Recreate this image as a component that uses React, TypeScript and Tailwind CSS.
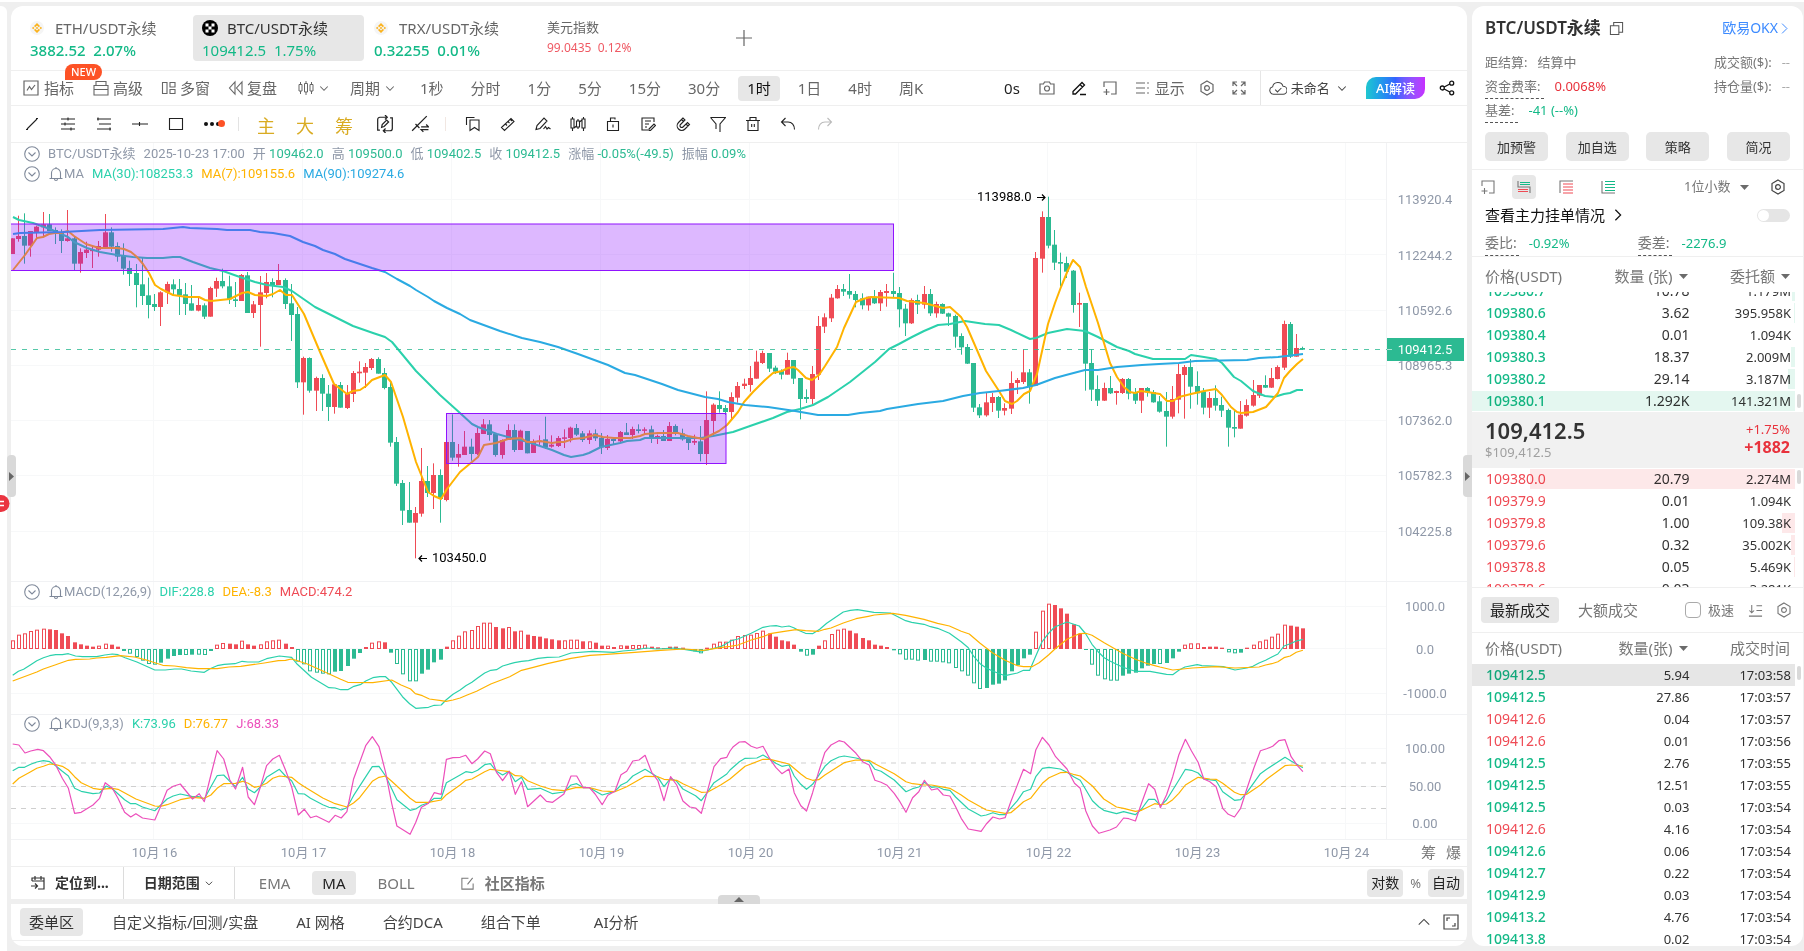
import { useState } from "react";
import type { ReactNode } from "react";
import clsx from "clsx";

type Seg = { x: number; k: number; pts: string };

const UP = "#ef4b55";
const DOWN = "#2cba92";
const TEAL = "#2bd1ac";
const YELLOW = "#ffb300";
const BLUE = "#2aaae2";
const PINK = "#ec4fbb";

// r = up, g = down; body top, body bottom, wick top, wick bottom
const CANDLES = `
r 175 222 175 222,r 168 177 107 185,g 168 197 100 251,r 153 197 153 230,r 140 157 137 178,r 133 142 96 168,g 133 153 102 153,g 150 157 142 192,
g 157 183 148 219,r 175 183 90 185,g 175 251 168 270,r 216 251 205 278,r 209 219 185 234,r 209 212 198 264,r 198 209 183 230,r 157 203 102 203,
g 157 200 142 215,g 198 230 187 245,g 227 266 190 284,g 264 282 242 318,g 279 315 252 382,g 313 348 233 375,g 346 375 293 415,g 372 381 342 393,
r 337 381 334 438,r 312 337 305 372,g 313 328 298 345,g 327 346 297 405,g 343 372 309 405,g 370 392 315 392,r 375 392 351 394,g 376 410 370 417,
r 324 410 320 410,r 303 326 293 351,g 303 319 266 325,g 319 358 287 372,g 358 363 306 381,r 285 363 282 363,g 286 399 276 399,r 373 399 363 414,
r 337 375 288 500,r 306 339 279 355,g 306 315 295 352,r 300 315 252 315,g 300 372 295 387,g 370 405 312 483,g 402 607 381 624,r 534 607 530 704,
g 534 632 532 638,r 594 632 590 693,g 594 641 583 693,g 641 681 615 723,r 613 681 613 701,g 615 683 606 683,r 642 684 615 687,r 579 642 573 666,
r 575 580 544 608,r 561 578 549 624,r 537 564 534 570,g 537 581 532 581,g 579 624 564 628,g 621 788 603 800,g 786 911 771 918,g 909 992 900 1035,
g 990 1028 906 1028,r 999 1028 981 1135,r 903 1001 804 1010,g 903 939 858 951,r 885 939 850 987,g 885 957 868 1028,r 786 960 786 964,g 786 833 703 842,
r 822 833 792 860,r 800 825 753 825,g 800 822 776 842,r 759 822 744 825,r 733 762 717 762,g 733 765 720 782,g 762 825 760 830,r 780 825 778 836,
r 750 780 733 780,g 750 810 733 816,r 752 810 749 810,g 753 820 753 820,r 784 819 778 819,r 782 785 766 798,g 778 803 710 807,r 794 800 766 803,
r 774 798 768 801,r 772 776 748 804,r 743 774 740 787,g 744 764 732 768,g 760 780 753 786,r 760 780 751 792,g 760 775 748 783,g 773 802 759 822,
r 777 804 765 810,g 777 783 772 794,r 756 784 753 787,g 757 765 729 765,r 747 765 740 777,g 748 753 733 760,r 748 752 742 765,g 748 772 737 789,
r 768 774 764 792,g 768 783 750 783,r 738 783 726 783,g 738 762 733 766,g 760 778 746 782,g 777 789 770 810,r 783 788 764 795,g 784 822 738 844,
r 720 822 634 855,r 674 723 670 765,g 675 687 634 698,g 684 696 675 705,r 651 696 637 718,r 618 653 606 668,r 611 618 596 627,r 594 615 558 635,
r 545 596 512 596,r 519 549 512 552,g 519 566 519 576,g 563 575 557 582,g 573 584 568 598,r 540 584 518 584,g 540 596 540 612,g 594 657 594 718,
g 651 657 628 669,r 582 657 558 673,r 438 584 408 600,r 412 440 400 459,r 353 415 342 426,r 327 355 315 356,g 327 335 312 348,g 333 344 282 356,
g 342 360 333 382,g 355 376 340 388,r 350 376 350 392,g 350 370 330 372,r 336 370 330 393,r 333 339 312 380,g 333 342 278 352,g 339 388 321 442,
g 386 430 372 468,r 360 430 355 432,g 360 374 344 402,r 342 374 318 386,g 342 400 327 408,r 372 400 365 413,g 372 401 370 402,g 400 410 398 438,
g 408 470 404 503,g 468 502 460 524,g 501 551 492 552,g 549 683 549 696,g 682 706 672 714,r 667 706 636 710,r 651 669 639 696,g 651 692 648 714,
r 684 692 670 706,r 609 686 574 702,r 600 609 594 642,r 577 606 508 612,g 577 618 567 671,r 234 617 216 618,r 111 236 94 278,g 111 197 50 205,
g 194 248 150 270,g 246 251 218 318,g 249 275 230 294,g 272 375 270 398,r 369 374 338 441,g 369 551 369 632,g 549 629 508 663,g 627 662 586 678,
r 624 662 608 663,g 624 640 588 642,r 633 639 632 674,r 597 639 594 642,g 597 641 594 658,g 638 662 624 672,r 624 662 624 699,g 624 637 621 650,
g 636 667 630 668,g 664 695 648 698,g 693 710 636 800,r 657 710 618 716,r 582 659 552 700,r 561 585 555 716,g 561 620 537 686,g 618 640 574 674,
g 634 683 624 703,r 654 683 636 714,g 654 677 616 692,g 675 692 650 711,g 690 743 686 800,g 741 746 690 772,r 704 746 663 746,r 675 707 658 710,
r 645 677 600 680,r 615 647 615 654,g 615 623 586 624,r 594 623 564 624,r 561 597 556 598,r 432 563 422 570,g 432 530 426 534,r 504 530 462 530,
g 504 509 500 510`
  .trim()
  .split(",")
  .map((row) => {
    const [side, ...n] = row.trim().split(" ");
    const [top, bottom, high, low] = n.map((v) => 180 + Number(v) / 3);
    return { up: side === "r", top, bottom, high, low };
  });

const MACD = [
  26, 43, 47, 54, 58, 61, 59, 57, 47, 39, 20, 14, 10, 7, 10, 16, 13, 7, -6, -14, -24, -35, -45, -47, -41, -29, -21, -18,
  -18, -17, -17, -18, -6, 13, 18, 16, 14, 25, 14, 10, 14, 23, 26, 28, 16, 6, -38, -46, -67, -71, -74, -76, -68, -66, -51,
  -29, -12, 6, 19, 23, 20, -11, -45, -76, -97, -97, -74, -62, -40, -32, 7, 26, 40, 53, 57, 69, 79, 79, 66, 62, 66, 53, 55,
  43, 39, 37, 32, 29, 26, 26, 28, 28, 23, 23, 19, 10, 10, 6, 11, 10, 12, 12, 13, 7, 5, 3, 7, 7, 4, -3, -7, -13, 4, 16, 22,
  22, 28, 39, 42, 43, 48, 55, 47, 37, 26, 23, 13, -8, -20, -17, 10, 26, 45, 58, 61, 55, 47, 33, 26, 13, 10, 6, -4, -16,
  -32, -32, -35, -33, -38, -38, -40, -43, -57, -67, -80, -103, -120, -117, -107, -104, -94, -67, -48, -28, -17, 52, 115,
  136, 132, 122, 106, 74, 46, -3, -47, -80, -91, -95, -95, -80, -74, -71, -58, -50, -45, -45, -42, -28, -8, 13, 17, 17, 6,
  7, 7, 4, -10, -13, -11, 4, 13, 23, 28, 37, 46, 73, 70, 67, 62,
];

const MA7 =
  "13,270 25,255 37,238 43,237 49,234 55,233 61,233 68,231 74,236 80,240 86,244 99,248 117,248 124,249 131,252 137,257 143,264 149,273 155,285 161,289 173,295 187,297 199,297 205,300 211,301 230,299 242,293 248,292 255,295 267,296 273,294 280,290 286,295 292,295 304,314 320,352 334,384 347,394 353,391 360,390 366,386 372,380 385,375 391,382 403,417 416,462 428,492 434,496 441,499 447,489 460,472 478,457 484,445 496,443 508,439 521,438 527,442 533,442 540,441 552,443 558,442 564,442 573,439 583,438 595,435 603,437 614,438 630,438 640,436 645,434 658,433 678,433 688,436 703,439 707,437 719,431 727,425 738,412 744,402 753,392 765,380 773,373 782,371 788,368 794,367 798,370 806,378 812,380 819,375 825,366 837,347 844,328 856,302 863,299 871,297 899,298 907,301 924,303 943,308 950,307 961,317 967,327 980,357 986,371 999,391 1005,401 1012,404 1017,401 1024,394 1030,391 1037,374 1048,324 1055,303 1061,287 1068,270 1073,260 1080,267 1086,287 1098,323 1104,343 1110,363 1117,377 1124,387 1130,392 1135,393 1141,391 1160,394 1167,401 1173,401 1179,397 1191,394 1204,391 1216,389 1222,395 1231,407 1237,412 1241,413 1253,412 1266,407 1273,399 1278,393 1284,378 1290,371 1297,364 1303,359";
const MA30 =
  "13,217 19,220 33,223 50,229 68,237 74,242 87,248 100,252 117,255 133,257 147,258 163,258 173,257 180,257 193,262 210,268 223,271 237,276 255,282 267,285 283,287 292,291 315,307 333,316 353,326 373,333 385,337 392,342 416,371 440,395 460,413 472,424 478,427 497,434 512,438 528,442 540,446 552,450 564,455 571,457 583,455 589,453 601,447 620,443 627,441 640,440 645,438 673,438 701,438 713,436 733,432 750,426 773,418 787,412 800,409 813,405 828,397 850,382 875,362 889,349 899,344 912,337 924,331 938,325 950,324 965,321 985,324 999,325 1011,330 1030,339 1036,338 1048,333 1067,329 1085,331 1098,337 1117,347 1129,351 1135,354 1153,359 1185,359 1191,355 1204,357 1216,359 1222,363 1234,377 1241,381 1253,391 1265,396 1274,397 1284,394 1290,393 1297,390 1303,390";
const MA90 =
  "13,234 20,233 63,232 100,230 163,229 183,227 190,228 217,229 227,230 250,230 260,232 273,233 290,236 303,242 315,246 323,250 335,254 345,259 360,264 372,268 385,272 397,279 410,286 416,290 428,297 434,301 447,308 460,314 470,320 500,331 522,338 540,342 558,347 578,354 608,365 625,373 635,375 662,384 678,390 705,397 718,399 728,402 745,405 768,407 795,411 818,415 848,415 860,413 880,411 887,409 918,404 943,401 963,396 980,393 999,391 1023,388 1036,385 1055,378 1066,375 1085,370 1098,370 1117,367 1142,365 1159,364 1179,363 1195,361 1247,360 1259,358 1278,357 1303,354";

const DIF = [
  "27,316 39,304 50,298 65,284 78,272 92,263 105,257 118,254 132,254 145,251 160,258 175,260 205,260 222,255 238,252 250,254 265,263 290,276 328,300 350,300 370,297 385,297 405,303 433,307 445,296 460,287 475,283 498,281 513,274 525,276 548,276 565,266 592,258 618,262 630,283 660,322 697,353 710,354 722,359 737,359 750,349 765,343 775,333 790,323 805,320 817,320 830,337 853,380 868,401 881,415 908,412 920,406 935,405 945,390 960,373 975,360 987,347 1000,337 1012,324 1027,309 1040,301 1052,299 1065,288 1090,278 1105,274 1120,272 1140,265 1160,262 1185,261 1210,249 1255,244 1300,247 1320,243 1345,240 1370,234 1390,237 1410,236 1430,234 1450,238 1480,245 1500,240 1530,228 1550,212",
  "0,213 17,207 45,190 70,172 85,168 98,167 110,171 125,168 135,173 145,181 160,190 175,191 190,178 205,160 240,126 255,121 270,119 305,127 340,129 372,152 385,157 411,163 425,170 440,175 465,190 490,215 505,233 517,260 530,281 543,294 556,303 583,317 609,309 622,301 635,301 648,258 661,216 675,190 688,171 714,156 740,168 754,192 767,223 780,245 793,263 806,274 819,283 832,291 845,298 859,304 890,304 925,313 938,314 951,301 964,291 990,284 1000,287 1045,290 1070,300 1095,294 1108,289 1121,279 1135,271 1148,261 1161,252 1174,228 1187,221 1200,213 1214,208",
];
const DEA = [
  "27,333 78,306 92,297 118,284 145,271 160,268 190,267 205,264 225,262 255,257 285,261 315,272 345,286 370,288 395,293 420,296 460,296 485,291 510,289 535,284 560,279 590,272 605,271 617,267 630,272 650,281 685,304 722,328 737,337 790,338 830,330 850,345 870,357 880,371 895,377 910,387 935,392 945,394 960,390 975,384 990,375 1010,364 1040,342 1080,320 1105,301 1130,292 1160,281 1210,265 1250,256 1285,253 1345,247 1400,241 1450,237 1490,241 1530,232",
  "0,229 17,225 45,210 70,200 85,191 115,184 140,179 160,182 188,184 201,178 214,174 240,159 267,146 293,139 306,135 345,130 372,136 411,148 440,160 465,168 490,184 507,192 530,220 556,248 583,271 596,279 609,287 622,290 640,290 655,278 675,255 688,238 714,208 740,191 754,190 767,196 793,218 832,250 859,268 885,281 898,286 911,291 938,300 980,294 1030,290 1070,294 1121,291 1135,285 1148,281 1161,275 1174,263 1187,258 1200,247 1214,241",
];
const K_LINE = [
  "27,602 40,592 52,592 65,583 78,576 92,572 105,575 118,587 132,604 145,618 158,655 172,664 197,671 211,669 225,648 238,656 264,689 277,701 288,701 302,711 328,722 354,687 367,678 382,672 408,680 422,680 433,687 447,650 460,617 474,615 487,634 499,650 514,622 526,657 539,668 552,650 565,622 592,598 605,618 618,632 632,671 645,672 658,685 684,704 697,712 710,713 723,720 735,713 749,677 789,590 803,589 817,618 841,689 869,721 881,717 893,706 908,698 920,685 935,685 946,638 975,615 987,605 1000,608 1012,601 1027,584 1039,581 1052,604 1065,615 1079,604 1092,635 1105,622 1118,658 1145,655 1171,671 1195,666 1210,645 1222,641 1236,653 1249,653 1276,675 1303,664 1316,645 1328,637 1341,618 1367,598 1394,622 1407,650 1421,625 1434,634 1447,657 1474,677 1486,692 1500,665 1513,638 1540,612",
  "0,600 20,575 32,565 57,564 70,555 85,568 97,580 110,589 125,585 136,618 150,643 162,658 175,643 201,589 214,572 231,561 242,558 267,564 295,575 307,598 320,604 348,630 373,665 387,656 400,651 412,637 427,652 440,650 452,658 466,661 478,681 505,717 532,738 543,735 557,728 571,734 583,734 609,692 622,665 637,658 648,620 662,595 676,592 700,597 714,607 730,622 742,631 768,692 782,711 792,721 819,731 834,725 859,734 872,717 887,688 900,688 912,707 925,690 951,631 965,598 978,601 992,609 1004,627 1030,632 1044,665 1069,691 1082,689 1095,668 1124,611 1137,598 1176,562 1189,573 1214,593",
];
const D_LINE = [
  "27,642 40,625 65,605 78,595 92,589 105,582 118,584 132,589 145,600 158,620 172,638 197,655 211,658 238,655 250,658 288,687 328,708 340,709 354,704 382,689 408,682 433,685 447,675 460,655 474,641 499,640 514,634 526,640 539,652 552,648 565,640 578,625 592,618 618,622 632,638 645,650 684,684 710,701 735,711 749,699 762,683 789,634 803,622 817,618 830,634 869,685 881,697 908,697 935,690 946,674 975,645 987,631 1000,627 1027,605 1039,598 1052,600 1079,605 1092,617 1105,618 1118,632 1145,648 1171,659 1195,662 1222,652 1249,653 1276,663 1303,665 1328,650 1367,619 1394,620 1407,628 1434,631 1447,641 1486,667 1500,666 1527,645",
  "0,627 32,589 70,568 85,568 125,582 150,612 162,625 175,631 188,629 201,615 242,578 267,570 295,571 307,581 348,611 373,635 387,641 412,645 427,645 466,655 490,675 505,690 543,720 583,730 595,728 609,712 622,695 637,685 662,640 676,623 700,608 714,607 730,614 742,618 768,648 792,687 819,711 834,715 859,724 872,721 900,701 912,704 925,702 938,689 951,670 965,645 992,622 1017,627 1030,628 1044,640 1069,667 1082,674 1095,673 1124,645 1137,628 1176,587 1189,585 1214,588",
];
const J_LINE = [
  "27,522 40,525 53,549 65,543 80,538 92,542 105,560 118,585 132,625 145,655 158,730 172,727 197,705 211,685 223,638 238,655 250,685 264,727 277,741 288,731 302,744 328,750 340,710 354,661 367,649 382,642 408,687 422,671 433,695 447,615 460,542 474,567 487,630 499,657 514,592 526,681 539,704 552,650 565,587 578,567 592,556 605,600 618,650 632,735 645,718 658,743 670,738 697,757 710,736 723,744 735,725 749,628 775,527 789,500 803,530 817,607 830,700 841,768 869,793 881,757 893,712 908,700 920,668 935,673 946,568 960,563 975,562 987,556 1000,581 1012,567 1027,543 1039,551 1052,607 1065,632 1079,604 1092,673 1105,635 1118,710 1145,675 1158,694 1171,697 1195,672 1210,618 1222,618 1236,653 1249,653 1261,672 1276,704 1288,676 1303,664 1316,614 1328,604 1341,573 1354,570 1367,556 1381,607 1394,632 1407,692 1421,620 1434,645 1447,693 1462,711 1474,714 1486,730 1500,658 1513,590 1527,566 1540,562",
  "0,543 7,530 20,516 32,515 45,529 57,535 70,529 85,568 97,592 110,611 125,597 136,668 150,707 162,723 175,668 188,605 201,547 214,525 231,512 242,516 267,550 281,575 295,585 307,631 320,637 333,646 348,670 360,695 373,727 387,683 400,665 412,631 427,660 440,656 452,675 466,678 478,710 490,745 505,777 532,784 543,762 557,741 571,747 583,743 595,695 622,598 637,611 648,540 662,502 676,525 690,560 714,597 730,640 742,655 754,723 768,768 782,790 805,780 819,771 834,744 845,746 859,753 872,700 887,641 900,658 912,713 925,675 938,620 951,555 965,508 978,543 992,577 1004,627 1017,635 1030,650 1044,715 1056,733 1069,741 1082,715 1095,657 1110,595 1124,542 1137,536 1150,529 1163,512 1176,509 1189,560 1202,586 1214,605",
];

const candleX = (i: number) => Math.floor(12 + i * 6.205);

// joins the two halves of an indicator line into one set of plot points
const joinHalves = (halves: string[]) => {
  const segs: Seg[] = halves.map((pts, i) => ({ x: i * 730, k: 2.119, pts }));
  return segs
    .flatMap((s) =>
      s.pts.split(" ").map((p) => {
        const [x, y] = p.split(",").map(Number);
        return `${(s.x + x / s.k).toFixed(1)},${(570 + y / 3).toFixed(1)}`;
      })
    )
    .join(" ");
};

const DAYS = ["16", "17", "18", "19", "20", "21", "22", "23", "24"];
const dayX = (i: number) => 153.5 + i * 149;

interface IconProps {
  d: string;
  size?: number;
  w?: number;
  className?: string;
  children?: ReactNode;
}

const Icon = ({ d, size = 16, w = 1.2, className, children }: IconProps) => (
  <svg
    width={size}
    height={size}
    viewBox="0 0 16 16"
    fill="none"
    stroke="currentColor"
    strokeWidth={w}
    className={clsx("shrink-0", className)}
    aria-hidden="true"
  >
    <path d={d} />
    {children}
  </svg>
);

const HEX = "M8 1l6 3.5v7L8 15l-6-3.5v-7z M8 5.6a2.4 2.4 0 1 1 0 4.8a2.4 2.4 0 1 1 0-4.8z";
const CORNER = "M2 7V2h12v12H9 M4.500 9v6 M1.500 12h6";
const CHEVRON = "M3 6l5 5 5-5";

const Chevron = ({ size = 12, className }: { size?: number; className?: string }) => (
  <Icon d={CHEVRON} size={size} w={1.4} className={className} />
);

const Triangle = () => (
  <svg width="9" height="5" viewBox="0 0 9 5" className="shrink-0 fill-[#6b6b6b]" aria-hidden="true">
    <path d="M0 0h9L4.500 5z" />
  </svg>
);

const BinanceIcon = () => (
  <svg width="14" height="14" viewBox="0 0 14 14" className="shrink-0" aria-hidden="true">
    <circle cx="7" cy="7" r="7" fill="#f5f5f5" />
    <g fill="#fbb21c">
      <path d="M7 2l3 3-1.200 1.200L7 4.400 5.200 6.200 4 5z M7 12l3-3-1.200-1.200L7 9.600 5.200 7.800 4 9z M7 5.800L8.200 7 7 8.200 5.800 7z M3.200 5.800L4.400 7 3.200 8.200 2 7z M10.800 5.800L12 7l-1.200 1.200L9.600 7z" />
    </g>
  </svg>
);

const OkxIcon = () => (
  <svg width="16" height="16" viewBox="0 0 16 16" className="shrink-0" aria-hidden="true">
    <circle cx="8" cy="8" r="8" fill="#000" />
    <path
      d="M3.500 3.500h3v3h-3z M9.500 3.500h3v3h-3z M6.500 6.500h3v3h-3z M3.500 9.500h3v3h-3z M9.500 9.500h3v3h-3z"
      fill="#fff"
    />
  </svg>
);

const Tabs = () => (
  <div className="flex h-[65px] shrink-0 items-start border-b border-[#efefef] pt-[9px]">
    <button className="ml-[2px] flex h-[46px] w-[171px] flex-col justify-center gap-1 rounded pt-px pl-[17px] text-left">
      <span className="flex items-center gap-[11px] text-[15px] leading-[18px] text-[#666]">
        <BinanceIcon />
        ETH/USDT永续
      </span>
      <span className="text-[15px] font-medium leading-[18px] text-[#13b987]">3882.52&nbsp; 2.07%</span>
    </button>
    <button className="ml-[9px] flex h-[46px] w-[171px] flex-col justify-center gap-1 rounded bg-[#e7e7e7] pt-px pl-[9px] text-left">
      <span className="flex items-center gap-[9px] text-[15px] leading-[18px] text-[#333]">
        <OkxIcon />
        BTC/USDT永续
      </span>
      <span className="text-[15px] leading-[18px] text-[#13b987]">109412.5&nbsp; 1.75%</span>
    </button>
    <button className="flex h-[46px] w-[171px] flex-col justify-center gap-1 rounded pt-px pl-[10px] text-left">
      <span className="flex items-center gap-[11px] text-[15px] leading-[18px] text-[#666]">
        <BinanceIcon />
        TRX/USDT永续
      </span>
      <span className="text-[15px] font-medium leading-[18px] text-[#13b987]">0.32255&nbsp; 0.01%</span>
    </button>
    <button className="flex h-[46px] w-[171px] flex-col justify-center gap-1 rounded pl-[12px] text-left">
      <span className="text-[13px] leading-4 text-[#666]">美元指数</span>
      <span className="text-xs leading-[18px] text-[#ef5a64]">99.0435&nbsp; 0.12%</span>
    </button>
    <button className="ml-[30px] mt-[15px] text-[#666]" aria-label="添加">
      <Icon d="M8 0v16M0 8h16" />
    </button>
  </div>
);

const PERIODS = ["1秒", "分时", "1分", "5分", "15分", "30分", "1时", "1日", "4时", "周K"];

const PeriodBar = () => {
  const [period, setPeriod] = useState("1时");
  return (
    <div className="flex h-[35px] shrink-0 items-center border-b border-[#efefef] pl-3 text-[15px] leading-none text-[#666] whitespace-nowrap">
      <button className="relative flex w-[70px] items-center gap-[5px]">
        <Icon d="M1 1h14v14H1z M4 10.500l2.500-4 2 3 3.500-4.500" />
        指标
        <span className="absolute -top-4 left-[42px] rounded-[8px] rounded-bl-none bg-[#fd5226] px-1.5 py-0.5 text-[11px] font-medium leading-3 text-white">
          NEW
        </span>
      </button>
      <button className="flex w-[68px] items-center gap-1">
        <Icon d="M1 5.500h14V15H1z M3 5.500V1.500h10v4 M1 9.500h14" w={1.1} />
        高级
      </button>
      <button className="flex w-[67px] items-center gap-[3px]">
        <Icon d="M1.500 2.500h4.500v11H1.500z M9 2.500h5V7H9z M9 9.500h5v4H9z" w={1.1} />
        多窗
      </button>
      <button className="flex w-[70px] items-center gap-[3px]">
        <Icon d="M7 2v12L1.500 8z M14 2v12L8.500 8z" w={1.1} />
        复盘
      </button>
      <button className="flex w-[52px] items-center gap-1" aria-label="K线类型">
        <Icon
          d="M2.500 2v2.500M2.500 11v3M1 4.500h3V11H1z M8 1v2.500M8 12v3M6.500 3.500h3V12h-3z M13.500 2v2.500M13.500 11v3M12 4.500h3V11h-3z"
          w={1}
        />
        <Chevron />
      </button>
      <button className="flex w-[61px] items-center gap-1">
        周期
        <Chevron />
      </button>
      <div className="flex items-center gap-[9px]">
        {PERIODS.map((p) => (
          <button
            key={p}
            onClick={() => setPeriod(p)}
            className={clsx("h-[25px] rounded px-[9px]", p === period && "bg-[#e7e7e7] text-[#111]")}
          >
            {p}
          </button>
        ))}
      </div>
      <div className="ml-auto flex items-center">
        <span className="text-[#222]">0s</span>
        <button className="ml-[19px]" aria-label="截图">
          <Icon d="M1 4h3.500l1-2h5l1 2H15v10H1z M8 6a2.500 2.500 0 1 1 0 5a2.500 2.500 0 1 1 0-5z" />
        </button>
        <button className="ml-4 text-[#111]" aria-label="画线">
          <Icon d="M2 11.500L11 2.500l2.500 2.500-9 9H2z M9 4.500L11.500 7 M9 14.500h6" w={1.3} />
        </button>
        <button className="ml-[15px]" aria-label="窗口">
          <Icon d={CORNER} />
        </button>
        <button className="ml-[17px] flex items-center gap-1">
          <Icon d="M1 3h9M1 8h9M1 13h9M13 2.300v1.500M13 7.300v1.500M13 12.300v1.500" />
          显示
        </button>
        <button className="ml-[14px]" aria-label="设置">
          <Icon d={HEX} />
        </button>
        <button className="ml-4" aria-label="全屏">
          <Icon d="M2 6V2h4M2 2l4 4M10 2h4v4M14 2l-4 4M2 10v4h4M2 14l4-4M14 10v4h-4M14 14l-4-4" />
        </button>
        <div className="ml-[13px] h-[34px] w-px bg-[#e6e6e6]" />
        <button className="ml-2 flex items-center text-[13px] text-[#444]">
          <Icon
            d="M4 13.500a3.300 3.300 0 0 1-.8-6.500A4.800 4.800 0 0 1 12.500 6.500a3.500 3.500 0 0 1 0 7z M5.500 9.500l2 2 3.500-3.500"
            size={18}
            w={0.9}
          />
          <span className="ml-1">未命名</span>
          <Chevron className="ml-1.5" />
        </button>
        <button className="ml-[18px] h-[22px] rounded-[10px] rounded-tr-none rounded-bl-none bg-linear-to-r from-[#21c7cf] via-[#3463ff] to-[#c72dff] px-[10px] text-[13px] font-medium text-white">
          AI解读
        </button>
        <button className="mr-3 ml-[14px] text-[#111]" aria-label="分享">
          <Icon d="M5.200 7l5.600-3M5.200 9l5.600 3" w={1.3}>
            <circle cx="3.300" cy="8" r="2" />
            <circle cx="12.700" cy="3.200" r="2" />
            <circle cx="12.700" cy="12.800" r="2" />
          </Icon>
        </button>
      </div>
    </div>
  );
};

const LINE_TOOLS = [
  { name: "线段", d: "M3 13L13 3M2 13.500h2M12 2.500h2" },
  { name: "平行线", d: "M1 3h14M1 8h14M1 13h14M8 1.500v3M5 6.500v3M11 11.500v3" },
  { name: "通道", d: "M1 3h14M3 8h12M1 13h14M2 1.500v3M14 11.500v3" },
  { name: "水平线", d: "M0 8h16M7.500 6v4" },
  { name: "矩形", d: "M1.500 2.500h13v11h-13z" },
];

const EDIT_TOOLS = [
  { name: "书签", d: "M1.500 9V1.500h8M5 4h9v10.500l-4.500-3-4.500 3z" },
  { name: "标尺", d: "M1.500 11.500l9.500-9 3 3-9.500 9zM8 5.500l1.500 1.500M5.500 8l1.500 1.500M10.500 3.500L12 5" },
  { name: "画笔", d: "M1 13.500l1-4 7-7.500 3 3-7 7.500zM8.500 13l2-2.500 1.500 2.500 1.500-1.500 2 1.500" },
  { name: "K线", d: "M1 3h3v9H1zM2.500 1v2M2.500 12v3M6.500 5h3v6h-3zM8 3v2M8 11v2M12 3h3v9h-3zM13.500 1v2M13.500 12v3M4 12l2.500-2M9.500 6L12 4" },
  { name: "锁定", d: "M2.500 5.500h11v9h-11zM5.500 5.500V2h4.500v1.500M8 8.500v3" },
  { name: "备注", d: "M8 14H2V2h12v4M5 5h6M5 8h4M5 11h2M9 13l5-5 1.500 1.500-5 5H9z" },
  { name: "磁吸", d: "M8 2L3.500 6.500a4.500 4.500 0 0 0 6.500 6.500L14.500 8.500l-2-2L8 11a1.700 1.700 0 0 1-2.500-2.500L10 4zM6.500 3.500l2 2M11 8l2 2" },
  { name: "筛选", d: "M.5 1.500h15L10 8v8M.5 1.500L6 8v5" },
  { name: "删除", d: "M1 4.500h14M3 4.500h10V14.500H3zM5 4.500V1.500h6v3M6.700 8v3M9.300 8v3" },
  { name: "撤销", d: "M5.500 2L1.500 6l4 4M1.500 6H8c4 0 6.500 3 6.500 7.500" },
];

const DrawBar = () => (
  <div className="flex h-[37px] shrink-0 items-center border-b border-[#efefef] pl-[13px] text-[#222]">
    <div className="flex items-center gap-5">
      {LINE_TOOLS.map((t) => (
        <button key={t.name} aria-label={t.name}>
          <Icon d={t.d} w={1.1} />
        </button>
      ))}
      <button className="flex items-center gap-0.5" aria-label="更多">
        <span className="size-1 rounded-full bg-[#111]" />
        <span className="size-1 rounded-full bg-[#111]" />
        <span className="size-1 rounded-full bg-[#111]" />
        <span className="-ml-1 mb-0.5 size-[7px] rounded-full bg-[#fd5226]" />
      </button>
    </div>
    <div className="ml-[13px] h-[14px] w-px bg-[#e3e3e3]" />
    <div className="mt-1 ml-[18px] flex items-center gap-[21px] text-[18px] leading-none text-[#d9ab22]">
      <button>主</button>
      <button>大</button>
      <button>筹</button>
    </div>
    <button className="ml-[23px]" aria-label="同步画线">
      <Icon
        d="M3.500 13.500h-2V4a2 2 0 0 1 2-2H9M12.500 2.500h2V12a2 2 0 0 1-2 2H7M8 0l2 2-2 2M8.500 12l-2 2 2 2M5 11l.5-2.500 4-4 1.700 1.700-4 4z"
        size={18}
        w={1.1}
      />
    </button>
    <button className="ml-[17px]" aria-label="切换画线">
      <Icon d="M1 14L14 1M4 8l3.500 3.500M9 10.500h6.500l-2-2M15.500 13H9l2 2" size={18} w={1.1} />
    </button>
    <div className="ml-[16px] h-[14px] w-px bg-[#f1e7e2]" />
    <div className="ml-[19px] flex items-center gap-[19px]">
      {EDIT_TOOLS.map((t) => (
        <button key={t.name} aria-label={t.name}>
          <Icon d={t.d} w={1.1} />
        </button>
      ))}
      <button className="ml-0.5 text-[#bbb]" aria-label="重做">
        <Icon d="M10.500 2l4 4-4 4M14.500 6H8c-4 0-6.500 3-6.500 7.500" w={1.1} />
      </button>
    </div>
  </div>
);

const Fold = () => (
  <button aria-label="折叠" className="shrink-0 text-[#7f899a]">
    <Icon d="M8 .7a7.300 7.300 0 1 1 0 14.600a7.300 7.300 0 1 1 0-14.600zM4.500 6.500L8 10l3.500-3.500" w={1.1} />
  </button>
);

const Bell = () => (
  <Icon
    d="M1.500 12.500h13M3.500 12.500V7a4.500 4.500 0 0 1 9 0v5.500M8 2.500V1M6.500 13a1.500 1.500 0 0 0 3 0"
    size={16}
    w={1.1}
    className="text-[#7f899a]"
  />
);

const Field = ({ label, value }: { label: string; value: string }) => (
  <span>
    {label} <span className="text-[#2cba92]">{value}</span>
  </span>
);

const Plot = () => (
  <svg
    viewBox="11 143 1376 697"
    preserveAspectRatio="none"
    className="absolute inset-0 h-full w-full"
    role="img"
    aria-label="BTC/USDT K线图"
  >
    <g stroke="#f7f8f9">
      {[199.5, 254.5, 310.5, 365.5, 420.5, 475.5, 531.5, 606.5, 648.5, 693.5, 748.5, 786.5, 823.5].map((y) => (
        <path key={y} d={`M11 ${y}H1387`} />
      ))}
      {DAYS.map((d, i) => (
        <path key={d} d={`M${dayX(i)} 143V840`} />
      ))}
    </g>
    <path d="M11 581.500H1387M11 714.500H1387M11 839.500H1387M1386.500 143V840" stroke="#f1f2f4" />
    <path d="M11 763H1387M11 786.500H1387M11 808.500H1387" stroke="#cfcfcf" strokeDasharray="5 5" />

    {CANDLES.map((c, i) => {
      const x = candleX(i);
      return (
        <g key={i} fill={c.up ? UP : DOWN}>
          <rect x={x} y={c.high} width="1" height={c.low - c.high} />
          <rect x={x - 2} y={c.top} width="5" height={Math.max(c.bottom - c.top, 1.5)} />
        </g>
      );
    })}
    <g fill="none" strokeWidth="2" strokeLinejoin="round">
      <polyline points={MA30} stroke={TEAL} />
      <polyline points={MA7} stroke={YELLOW} />
      <polyline points={MA90} stroke={BLUE} />
    </g>
    <path d="M11 349.500H1387" stroke={DOWN} strokeDasharray="5 6" strokeOpacity=".8" />
    <g fill="#9013fe" fillOpacity=".3" stroke="#9013fe">
      <rect x="0" y="224" width="893.5" height="46.500" />
      <rect x="446.500" y="413.500" width="279.500" height="50" />
    </g>

    {MACD.map((v, i) => {
      const x = candleX(i) - 1;
      const h = Math.abs(v) / 3;
      const hollow = h > 3 && Math.abs(v) >= Math.abs(MACD[i - 1] ?? 0);
      const color = v > 0 ? UP : DOWN;
      const y = v > 0 ? 649 - h : 649;
      return hollow ? (
        <rect key={i} x={x + 0.5} y={y + 0.5} width="3" height={h - 1} fill="#fff" stroke={color} />
      ) : (
        <rect key={i} x={x} y={y} width="4" height={h} fill={color} />
      );
    })}
    <g fill="none" strokeWidth="1.2" strokeLinejoin="round">
      <polyline points={joinHalves(DIF)} stroke={TEAL} />
      <polyline points={joinHalves(DEA)} stroke={YELLOW} />
      <polyline points={joinHalves(K_LINE)} stroke={TEAL} />
      <polyline points={joinHalves(D_LINE)} stroke={YELLOW} />
      <polyline points={joinHalves(J_LINE)} stroke={PINK} />
    </g>

    <g fontSize="13" fill="#000">
      <text x="977" y="201">113988.0</text>
      <text x="432" y="562">103450.0</text>
    </g>
    <path d="M1037 197.500h8m-3-3l3 3-3 3M427 558.500h-8m3-3l-3 3 3 3" stroke="#000" strokeWidth="1.200" fill="none" />
  </svg>
);

const AXIS = [
  { y: 199, t: "113920.4" },
  { y: 255, t: "112244.2" },
  { y: 310, t: "110592.6" },
  { y: 365, t: "108965.3" },
  { y: 420, t: "107362.0" },
  { y: 475, t: "105782.3" },
  { y: 531, t: "104225.8" },
  { y: 606, t: "1000.0" },
  { y: 649, t: "0.0" },
  { y: 693, t: "-1000.0" },
  { y: 748, t: "100.00" },
  { y: 786, t: "50.00" },
  { y: 823, t: "0.00" },
];

const PriceAxis = () => (
  <svg viewBox="1387 143 80 697" preserveAspectRatio="none" className="h-full w-20 shrink-0">
    <path d="M1387 581.500H1467M1387 714.500H1467M1387 839.500H1467" stroke="#f1f2f4" />
    <g fontSize="13" fill="#8f98a8" textAnchor="middle">
      {AXIS.map((a) => (
        <text key={a.y} x="1425" y={a.y + 5}>
          {a.t}
        </text>
      ))}
    </g>
    <rect x="1387" y="338" width="77" height="23" fill={DOWN} />
    <path d="M1387 349.500h5" stroke="#fff" strokeOpacity=".6" />
    <text x="1425" y="354" fontSize="13" fill="#fff" textAnchor="middle">
      109412.5
    </text>
  </svg>
);

const Chart = () => (
  <div className="flex min-h-0 flex-1 flex-col [font-family:Roboto,'Noto_Sans_CJK_SC',sans-serif]">
    <div className="flex min-h-0 flex-1">
      <div className="relative flex-1 overflow-hidden text-[13px] leading-4 text-[#8f98a8] whitespace-nowrap">
        <Plot />
        <div className="absolute top-[3px] left-[13px] flex items-center gap-2">
          <Fold />
          <span>BTC/USDT永续</span>
          <span>2025-10-23 17:00</span>
          <Field label="开" value="109462.0" />
          <Field label="高" value="109500.0" />
          <Field label="低" value="109402.5" />
          <Field label="收" value="109412.5" />
          <Field label="涨幅" value="-0.05%(-49.5)" />
          <Field label="振幅" value="0.09%" />
        </div>
        <div className="absolute top-[23px] left-[13px] flex items-center gap-2">
          <Fold />
          <span className="flex items-center">
            <Bell />
            MA
          </span>
          <span className="text-[#2bd1ac]">MA(30):108253.3</span>
          <span className="text-[#ffb300]">MA(7):109155.6</span>
          <span className="text-[#2aaae2]">MA(90):109274.6</span>
        </div>
        <div className="absolute top-[441px] left-[13px] flex items-center gap-2">
          <Fold />
          <span className="flex items-center">
            <Bell />
            MACD(12,26,9)
          </span>
          <span className="text-[#2bd1ac]">DIF:228.8</span>
          <span className="text-[#ffb300]">DEA:-8.3</span>
          <span className="text-[#ef4b55]">MACD:474.2</span>
        </div>
        <div className="absolute top-[573px] left-[13px] flex items-center gap-2">
          <Fold />
          <span className="flex items-center">
            <Bell />
            KDJ(9,3,3)
          </span>
          <span className="text-[#2bd1ac]">K:73.96</span>
          <span className="text-[#ffb300]">D:76.77</span>
          <span className="text-[#ec4fbb]">J:68.33</span>
        </div>
      </div>
      <PriceAxis />
    </div>
    <div className="flex h-[26px] shrink-0 items-center pl-[69px] text-[13px] text-[#8f98a8]">
      {DAYS.map((d) => (
        <span key={d} className="w-[149px] shrink-0 text-center">
          10月 {d}
        </span>
      ))}
      <span className="ml-auto flex gap-2.5 pr-1.5 text-[15px] text-[#777]">
        <button>筹</button>
        <button>爆</button>
      </span>
    </div>
  </div>
);

const RangeBar = () => (
  <div className="flex h-[33px] shrink-0 items-center border-t border-[#efefef] pl-[19px] text-[15px] leading-none text-[#777] whitespace-nowrap">
    <button className="flex items-center gap-[9px] text-[14px] font-bold text-[#333]">
      <Icon d="M2 6V3h12v11H8M5 1v4M11 1v4M2 6h12M1 11h6M5 8.500L7.500 11 5 13.500" w={1.2} />
      定位到...
    </button>
    <div className="ml-[14px] h-8 w-px bg-[#dcdcdc]" />
    <button className="ml-5 flex items-center gap-1 text-[14px] font-bold text-[#333]">
      日期范围
      <Chevron size={10} />
    </button>
    <div className="ml-5 h-8 w-px bg-[#dcdcdc]" />
    <button className="ml-[24px]">EMA</button>
    <button className="ml-[22px] h-6 rounded bg-[#e7e7e7] px-[10px] text-[#222]">MA</button>
    <button className="ml-[22px]">BOLL</button>
    <button className="ml-[45px] flex items-center gap-[10px] font-bold">
      <Icon d="M9 2.500H2v11.500h12V8M8 9l5.500-7" w={1.1} size={15} />
      社区指标
    </button>
    <div className="ml-auto flex items-center gap-[7px] pr-[3px] text-[14px]">
      <button className="h-7 rounded-sm bg-[#e7e7e7] px-1 text-[#222]">对数</button>
      <button className="text-[13px]">%</button>
      <button className="h-7 rounded-sm bg-[#e7e7e7] px-1 text-[#222]">自动</button>
    </div>
  </div>
);

const BottomBar = () => (
  <div className="flex h-[42px] shrink-0 flex-col rounded-b-xl bg-white">
    <div className="flex h-[37px] items-center border-b border-[#efefef] pl-[9px] text-[15px] leading-none text-[#444] whitespace-nowrap">
      <button className="h-7 rounded bg-[#e7e7e7] px-[9px] text-[#333]">委单区</button>
      <button className="ml-[29px]">自定义指标/回测/实盘</button>
      <button className="ml-[38px]">AI 网格</button>
      <button className="ml-[38px]">合约DCA</button>
      <button className="ml-[38px]">组合下单</button>
      <button className="ml-[53px]">AI分析</button>
      <button className="ml-auto" aria-label="展开">
        <Icon d="M2 11l6-6 6 6" size={14} />
      </button>
      <button className="mr-2 ml-3" aria-label="最大化">
        <Icon d="M1 1h14v14H1zM4 7V4h3M12 9v3H9" />
      </button>
    </div>
  </div>
);

const BIDS = [
  ["109380.7", "10.78", "1.179M", 3],
  ["109380.6", "3.62", "395.958K", 1],
  ["109380.4", "0.01", "1.094K", 0],
  ["109380.3", "18.37", "2.009M", 4],
  ["109380.2", "29.14", "3.187M", 7],
  ["109380.1", "1.292K", "141.321M", 323],
] as const;

const ASKS = [
  ["109380.0", "20.79", "2.274M", 265],
  ["109379.9", "0.01", "1.094K", 0],
  ["109379.8", "1.00", "109.38K", 13],
  ["109379.6", "0.32", "35.002K", 4],
  ["109378.8", "0.05", "5.469K", 1],
  ["109378.6", "0.03", "3.281K", 0],
] as const;

const TRADES = [
  ["g", "109412.5", "5.94", "17:03:58"],
  ["g", "109412.5", "27.86", "17:03:57"],
  ["r", "109412.6", "0.04", "17:03:57"],
  ["r", "109412.6", "0.01", "17:03:56"],
  ["g", "109412.5", "2.76", "17:03:55"],
  ["g", "109412.5", "12.51", "17:03:55"],
  ["g", "109412.5", "0.03", "17:03:54"],
  ["r", "109412.6", "4.16", "17:03:54"],
  ["g", "109412.6", "0.06", "17:03:54"],
  ["g", "109412.7", "0.22", "17:03:54"],
  ["g", "109412.9", "0.03", "17:03:54"],
  ["g", "109413.2", "4.76", "17:03:54"],
  ["g", "109413.8", "0.02", "17:03:54"],
];

const Depth = ({ rows, bid }: { rows: typeof BIDS | typeof ASKS; bid: boolean }) => (
  <table className="w-full shrink-0 table-fixed" aria-label={bid ? "买盘" : "卖盘"}>
    <tbody>
      {rows.map(([price, amount, total, bar]) => (
        <tr key={price} className="relative h-[22px] text-sm leading-5 text-[#333]">
          <td className={clsx("w-[35%] p-0 pl-[14px]", bid ? "font-medium text-[#13b987]" : "text-[#ef4b55]")}>
            {price}
            <span
              className={clsx(
                "absolute inset-y-px right-2 mix-blend-multiply",
                bid ? "bg-[#e4f7f0]" : "bg-[#fde8e9]"
              )}
              style={{ width: bar }}
            />
          </td>
          <td className="w-[31%] p-0 pr-px text-right">{amount}</td>
          <td className="p-0 pr-3 text-right text-[13px]">{total}</td>
        </tr>
      ))}
    </tbody>
  </table>
);

const Thumb = ({ className }: { className: string }) => (
  <div className={clsx("absolute right-0.5 h-[14px] w-1 rounded-sm bg-[#d9d9d9]", className)} />
);

const Book = () => {
  const [big, setBig] = useState(false);
  return (
    <>
      <div className="flex h-[164px] shrink-0 flex-col border-b border-[#efefef] px-[13px] pt-3 text-[13px] leading-5 text-[#777]">
        <div className="flex items-center">
          <h1 className="text-[17px] font-semibold leading-5 text-[#333]">BTC/USDT永续</h1>
          <button className="ml-2 text-[#555]" aria-label="复制">
            <Icon d="M1.500 5h9v9.500h-9zM5 5V1.500h9.500V12h-4" w={1.1} size={15} />
          </button>
          <a href="#okx" className="ml-auto -mr-px flex items-center text-sm leading-5 text-[#3d8bff]">
            欧易OKX
            <Icon d="M5 2l6 6-6 6" size={13} />
          </a>
        </div>
        <div className="mt-3 flex h-6 items-center">
          距结算:<span className="ml-2.5">结算中</span>
          <span className="ml-auto">
            成交额($):<span className="ml-2.5 text-[#aaa]">--</span>
          </span>
        </div>
        <div className="flex h-6 items-center">
          <span className="border-b border-dashed border-[#555] pr-1 leading-6">资金费率:</span>
          <span className="ml-2.5 text-[#e8323c]">0.0068%</span>
          <span className="ml-auto">
            持仓量($):<span className="ml-2.5 text-[#aaa]">--</span>
          </span>
        </div>
        <div className="flex h-6 items-center">
          <span className="border-b border-dashed border-[#555] pr-1 leading-6">基差:</span>
          <span className="ml-2.5 text-[#13b987]">-41 (--%)</span>
        </div>
        <div className="mt-[10px] flex justify-between text-[#333]">
          {["加预警", "加自选", "策略", "简况"].map((t) => (
            <button key={t} className="h-[29px] w-[63px] rounded-[5px] bg-[#e7e7e7]">
              {t}
            </button>
          ))}
        </div>
      </div>

      <div className="flex h-[87px] shrink-0 flex-col border-b border-[#efefef] pr-[13px] pl-2 text-[#777]">
        <div className="mt-[5px] flex h-6 items-center pr-1 text-[13px]">
          <button aria-label="窗口">
            <Icon d={CORNER} w={1.1} />
          </button>
          <button className="ml-4 flex size-6 items-center justify-center rounded bg-[#e7e7e7]" aria-label="全部">
            <Icon d="M2 2v6h12v6" w={1.1}>
              <path d="M4 3.500h10M4 5.500h10" stroke="#13b987" />
              <path d="M2 10.500h10M2 12.500h10" stroke="#ef4b55" />
            </Icon>
          </button>
          <button className="ml-[22px]" aria-label="卖盘">
            <Icon d="M15 2H2v12" w={1.1}>
              <path d="M5 5h10M5 8h10M5 11h10M5 14h10" stroke="#ef4b55" />
            </Icon>
          </button>
          <button className="ml-[26px]" aria-label="买盘">
            <Icon d="M2 2v12h13" w={1.1}>
              <path d="M5 2.500h10M5 5.500h10M5 8.500h10M5 11.500h10" stroke="#13b987" />
            </Icon>
          </button>
          <label className="ml-auto flex items-center">
            <select className="w-[56px] appearance-none bg-transparent outline-none" aria-label="小数位">
              <option>1位小数</option>
            </select>
            <Triangle />
          </label>
          <button className="ml-[21px] text-[#444]" aria-label="设置">
            <Icon d={HEX} />
          </button>
        </div>
        <div className="mt-[5px] flex h-[22px] items-center pl-[5px]">
          <a href="#orders" className="flex items-center gap-1.5 text-[15px] text-[#111]">
            查看主力挂单情况
            <Icon d="M5 2l6 6-6 6" size={14} w={1.4} />
          </a>
          <label className="relative ml-auto h-[13px] w-[33px] cursor-pointer">
            <input
              type="checkbox"
              role="switch"
              aria-label="主力挂单"
              checked={big}
              onChange={() => setBig((prev) => !prev)}
              className="peer block h-[13px] w-[33px] appearance-none rounded-full bg-[#e5e5e5] checked:bg-[#13b987]"
            />
            <span className="absolute top-px left-px size-[11px] rounded-full bg-white peer-checked:left-[21px]" />
          </label>
        </div>
        <div className="mt-[5px] flex items-center pl-[5px] text-sm">
          <span className="border-b border-dashed border-[#555] pr-0.5 leading-6">委比:</span>
          <span className="ml-2.5 w-[109px] text-[13px] text-[#13b987]">-0.92%</span>
          <span className="border-b border-dashed border-[#555] pr-0.5 leading-6">委差:</span>
          <span className="ml-2.5 text-[13px] text-[#13b987]">-2276.9</span>
        </div>
      </div>

      <div className="flex h-[35px] shrink-0 items-center pt-1 text-[15px] leading-none text-[#777] whitespace-nowrap">
        <span className="w-[35%] pl-[13px]">价格(USDT)</span>
        <button className="flex w-[31%] items-center justify-end gap-[7px] pr-0.5">
          数量 (张) <Triangle />
        </button>
        <button className="ml-auto flex items-center gap-1.5 pr-[13px]">
          委托额 <Triangle />
        </button>
      </div>

      <div className="relative flex h-[120px] shrink-0 flex-col justify-end overflow-hidden">
        <Depth rows={BIDS} bid />
        <Thumb className="bottom-1" />
      </div>
      <div className="flex h-[56px] shrink-0 items-center justify-between bg-[#f1f1f1] px-[13px] pb-1">
        <div>
          <div className="text-[22px] font-semibold leading-7 text-[#333]">109,412.5</div>
          <div className="text-[13px] leading-4 text-[#a0a0a0]">$109,412.5</div>
        </div>
        <div className="text-right text-[#e8323c]">
          <div className="text-[13px] leading-[18px]">+1.75%</div>
          <div className="text-base font-bold leading-[18px]">+1882</div>
        </div>
      </div>
      <div className="relative h-[119px] shrink-0 overflow-hidden">
        <Depth rows={ASKS} bid={false} />
        <Thumb className="top-0.5" />
      </div>
    </>
  );
};

const Trades = () => (
  <>
    <div className="flex h-[46px] shrink-0 items-center border-y border-[#efefef] pl-[9px] pr-[11px] text-[15px] leading-none text-[#777]">
      <button className="h-[26px] rounded bg-[#e7e7e7] px-[9px] text-[#222]">最新成交</button>
      <button className="ml-[19px]">大额成交</button>
      <label className="ml-auto flex items-center gap-[7px] text-[13px]">
        <input type="checkbox" className="size-4 appearance-none rounded-sm border border-[#aaa] checked:bg-[#13b987]" />
        极速
      </label>
      <button className="ml-[14px]" aria-label="排序">
        <Icon d="M4 2v8M1.500 8L4 10.500 6.500 8M9 3h6M9 8h6M1 14h14" w={1.1} size={15} />
      </button>
      <button className="ml-[13px]" aria-label="设置">
        <Icon d={HEX} w={1.1} />
      </button>
    </div>
    <div className="relative min-h-0 flex-1 overflow-hidden">
      <table className="w-full table-fixed">
        <thead>
          <tr className="h-[31px] text-[15px] text-[#777] whitespace-nowrap">
            <th className="w-[35%] p-0 pl-[13px] text-left font-normal">价格(USDT)</th>
            <th className="w-[31%] p-0 pr-0.5 text-right font-normal">
              <span className="flex items-center justify-end gap-[7px]">
                数量(张) <Triangle />
              </span>
            </th>
            <th className="p-0 pr-[13px] text-right font-normal">成交时间</th>
          </tr>
        </thead>
        <tbody>
          {TRADES.map(([side, price, amount, time], idx) => (
            <tr key={idx} className="relative h-[22px] text-[13px] leading-5 text-[#333]">
              <td
                className={clsx(
                  "w-[35%] p-0 pl-[14px] text-sm",
                  side === "g" ? "font-medium text-[#13b987]" : "text-[#ef4b55]"
                )}
              >
                {idx === 0 && <span className="absolute inset-y-0 left-0 right-2 bg-[#e6e6e6] mix-blend-multiply" />}
                {price}
              </td>
              <td className="p-0 pr-px text-right">{amount}</td>
              <td className="p-0 pr-3 text-right">{time}</td>
            </tr>
          ))}
        </tbody>
      </table>
      <Thumb className="top-[33px]" />
    </div>
  </>
);

export default function App() {
  return (
    <div className="relative flex h-screen gap-[5px] overflow-hidden border-t-2 border-white bg-[#efefef] pt-1 pr-px pb-[5px] [font-family:'Noto_Sans','Noto_Sans_CJK_SC',sans-serif]">
      <aside className="-mb-[5px] mr-[-1px] w-[7px] shrink-0 rounded-tr-md bg-white" />
      <main className="relative flex min-w-0 flex-1 flex-col gap-[5px]">
        <section className="relative flex min-h-0 flex-1 flex-col rounded-t-xl bg-white">
          <Tabs />
          <PeriodBar />
          <DrawBar />
          <Chart />
          <RangeBar />
          <button
            className="absolute -bottom-[5px] left-[707px] flex h-[9px] w-[42px] items-center justify-center rounded-t-sm bg-[#d9d9d9]"
            aria-label="展开面板"
          >
            <svg width="10" height="5" viewBox="0 0 10 5" fill="#666">
              <path d="M0 5L5 0l5 5z" />
            </svg>
          </button>
        </section>
        <BottomBar />
        <button
          className="absolute top-[449px] -left-1 flex h-[42px] w-[9px] items-center rounded-sm bg-[#d9d9d9] pl-0.5"
          aria-label="左侧栏"
        >
          <svg width="5" height="9" viewBox="0 0 5 9" fill="#666">
            <path d="M0 0l5 4.500L0 9z" />
          </svg>
        </button>
        <button
          className="absolute top-[449px] -right-[5px] z-10 flex h-[42px] w-[9px] items-center justify-center rounded-l-sm bg-[#d9d9d9]"
          aria-label="右侧栏"
        >
          <svg width="5" height="9" viewBox="0 0 5 9" fill="#666">
            <path d="M0 0l5 4.500L0 9z" />
          </svg>
        </button>
      </main>
      <aside className="relative flex w-[331px] shrink-0 flex-col overflow-hidden rounded-xl bg-white">
        <Book />
        <Trades />
      </aside>
      <svg width="10" height="17" viewBox="0 0 10 17" className="absolute top-[493px] left-0" aria-hidden="true">
        <circle cx="1" cy="8.500" r="8.500" fill="#ea3440" />
        <path d="M0 6.500h4M0 10.500h4" stroke="#fff" strokeWidth="1.500" />
      </svg>
    </div>
  );
}
